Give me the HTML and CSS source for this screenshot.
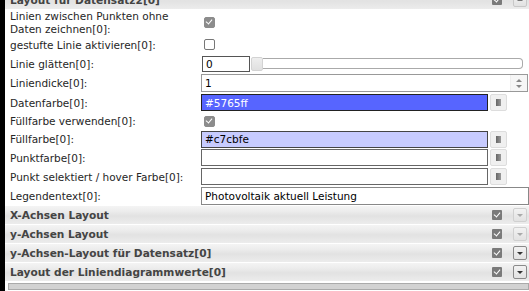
FILE: index.html
```html
<!DOCTYPE html>
<html lang="de">
<head>
<meta charset="UTF-8" />
<title>Layout</title>
<link rel="stylesheet" href="styles.css">
</head>
<body>
<div id="panel">
  <div class="group open top">
    <span class="title">Layout für Datensatz2[0]</span>
    <span class="chk on"></span>
    <span class="tog up"></span>
  </div>

  <div class="row tall">
    <div class="label">Linien zwischen Punkten ohne<br>Daten zeichnen[0]:</div>
    <div class="field"><span class="box on"></span></div>
  </div>
  <div class="row">
    <div class="label">gestufte Linie aktivieren[0]:</div>
    <div class="field"><span class="box"></span></div>
  </div>
  <div class="row">
    <div class="label">Linie glätten[0]:</div>
    <div class="field">
      <input class="small" type="text" value="0">
      <div class="slider"><span class="handle"></span><span class="track"></span></div>
    </div>
  </div>
  <div class="row high">
    <div class="label">Liniendicke[0]:</div>
    <div class="field">
      <div class="spin"><input type="text" value="1"><span class="arrows"><i class="a-up"></i><i class="a-down"></i></span></div>
    </div>
  </div>
  <div class="row">
    <div class="label">Datenfarbe[0]:</div>
    <div class="field">
      <input class="color dark" type="text" value="#5765ff">
      <span class="pick"><i></i></span>
    </div>
  </div>
  <div class="row short">
    <div class="label">Füllfarbe verwenden[0]:</div>
    <div class="field"><span class="box on"></span></div>
  </div>
  <div class="row short">
    <div class="label">Füllfarbe[0]:</div>
    <div class="field">
      <input class="color light" type="text" value="#c7cbfe">
      <span class="pick"><i></i></span>
    </div>
  </div>
  <div class="row">
    <div class="label">Punktfarbe[0]:</div>
    <div class="field">
      <input class="color" type="text" value="">
      <span class="pick"><i></i></span>
    </div>
  </div>
  <div class="row">
    <div class="label">Punkt selektiert / hover Farbe[0]:</div>
    <div class="field">
      <input class="color" type="text" value="">
      <span class="pick"><i></i></span>
    </div>
  </div>
  <div class="row">
    <div class="label">Legendentext[0]:</div>
    <div class="field"><input class="wide" type="text" value="Photovoltaik aktuell Leistung"></div>
  </div>

  <div class="group first">
    <span class="title">X-Achsen Layout</span>
    <span class="chk on"></span>
    <span class="tog dim"></span>
  </div>
  <div class="group">
    <span class="title">y-Achsen Layout</span>
    <span class="chk on"></span>
    <span class="tog dim"></span>
  </div>
  <div class="group">
    <span class="title">y-Achsen-Layout für Datensatz[0]</span>
    <span class="chk on"></span>
    <span class="tog"></span>
  </div>
  <div class="group">
    <span class="title">Layout der Liniendiagrammwerte[0]</span>
    <span class="chk on"></span>
    <span class="tog"></span>
  </div>
  <div class="bar"></div>
</div>
</body>
</html>
```

FILE: styles.css
```css
body {
  margin: 0;
  background: #fff;
  font-family: "DejaVu Sans", Verdana, sans-serif;
  font-size: 10.5px;
  color: #262626;
  overflow: hidden;
}
#panel {
  border-left: 5px solid #000;
  height: 291px;
  overflow: hidden;
}
/* collapsible group headers */
.group {
  display: flex;
  align-items: center;
  height: 18px;
  padding-left: 5px;
  background: linear-gradient(to bottom, #f4f4f4 0%, #ececec 30%, #e2e2e2 55%, #ececec 100%);
  border-bottom: 1px solid #fff;
  font-weight: bold;
  font-size: 10.6px;
  color: #444;
}
.group.top {
  margin-top: -9px;
}
.group.first {
  margin-top: 1px;
}
.group .title {
  flex: 1;
}
.chk {
  width: 10px;
  height: 10px;
  background: #7a7a7a;
  border-radius: 1px;
  margin-right: 11px;
  position: relative;
}
.chk.on::after {
  content: "";
  position: absolute;
  left: 3px;
  top: 1px;
  width: 3px;
  height: 5px;
  border: solid #fff;
  border-width: 0 1.5px 1.5px 0;
  transform: rotate(40deg);
}
.tog {
  width: 12px;
  height: 12px;
  border: 1px solid #8a8a8a;
  border-radius: 2px;
  background: linear-gradient(#f2f2f2, #e2e2e2);
  margin-right: 2px;
  position: relative;
}
.tog::after {
  content: "";
  position: absolute;
  left: 3px;
  top: 5px;
  border-left: 3px solid transparent;
  border-right: 3px solid transparent;
  border-top: 3px solid #333;
}
.tog.dim {
  border-color: #d0d0d0;
}
.tog.dim::after {
  border-top-color: #aaa;
}
.tog.up::after {
  border-top: 0;
  border-bottom: 3px solid #777;
  top: 4px;
}
.tog.up {
  border-color: #c8c8c8;
}
/* property rows */
.row {
  display: flex;
  align-items: center;
  height: 19px;
}
.row.tall {
  height: 25px;
  line-height: 13px;
}
.row.high {
  height: 20px;
}
.row.short {
  height: 18px;
}
.label {
  width: 191px;
  padding-left: 5px;
  white-space: nowrap;
}
.field {
  flex: 1;
  display: flex;
  align-items: center;
  min-width: 0;
}
.box {
  width: 9px;
  height: 9px;
  margin-left: 3px;
  border: 1px solid #777;
  border-radius: 2px;
  background: #fff;
  position: relative;
}
.box.on {
  background: #8c8c8c;
  border-color: #8c8c8c;
}
.box.on::after {
  content: "";
  position: absolute;
  left: 2px;
  top: 0;
  width: 3px;
  height: 5px;
  border: solid #fff;
  border-width: 0 1.5px 1.5px 0;
  transform: rotate(40deg);
}
input {
  font-family: "DejaVu Sans", Verdana, sans-serif;
  font-size: 10.5px;
  height: 17px;
  box-sizing: border-box;
  border: 1px solid #767676;
  padding: 0 3px;
  margin: 0;
  color: #000;
  background: #fff;
  outline: none;
}
input.small {
  width: 48px;
  margin-left: 1px;
  height: 16px;
  border-color: #555;
}
.slider {
  flex: 1;
  display: flex;
  align-items: center;
  margin-right: 6px;
}
.handle {
  width: 12px;
  height: 14px;
  border: 1px solid #d3d3d3;
  border-radius: 2px;
  background: linear-gradient(#eee, #e0e0e0);
  box-sizing: border-box;
  margin-left: 1px;
}
.track {
  flex: 1;
  height: 9px;
  border: 1px solid #aaa;
  border-left: 0;
  border-radius: 0 4px 4px 0;
  background: #fff;
}
.spin {
  display: flex;
  width: 327px;
  height: 18px;
  border: 1px solid #999;
  box-sizing: border-box;
}
.spin input {
  flex: 1;
  border: 0;
  height: 16px;
  padding-left: 3px;
}
.arrows {
  width: 16px;
  display: flex;
  flex-direction: column;
  justify-content: center;
  align-items: center;
  gap: 3px;
  background: #f6f6f6;
  border-left: 1px solid #eee;
}
.arrows i {
  width: 0;
  height: 0;
  border-left: 3px solid transparent;
  border-right: 3px solid transparent;
}
.a-up {
  border-bottom: 3px solid #888;
}
.a-down {
  border-top: 3px solid #888;
}
input.color {
  width: 287px;
  border-color: #666;
}
input.color.dark {
  background: #5765ff;
  color: #fff;
  border-color: #222;
}
input.color.light {
  background: #c7cbfe;
  color: #000;
  border-color: #444;
}
.pick {
  width: 15px;
  height: 15px;
  margin-left: 2px;
  border: 1px solid #ddd;
  border-radius: 2px;
  background: #f0f0f0;
  display: flex;
  align-items: center;
  justify-content: center;
}
.pick i {
  width: 5px;
  height: 7px;
  background: linear-gradient(to right, #666, #999);
}
input.wide {
  width: 329px;
  border-color: #888;
  height: 18px;
}
.bar {
  height: 5px;
  margin-left: 3px;
  margin-top: 1px;
  border: 1px solid #aaa;
  background: #d2d2d2;
}
```
